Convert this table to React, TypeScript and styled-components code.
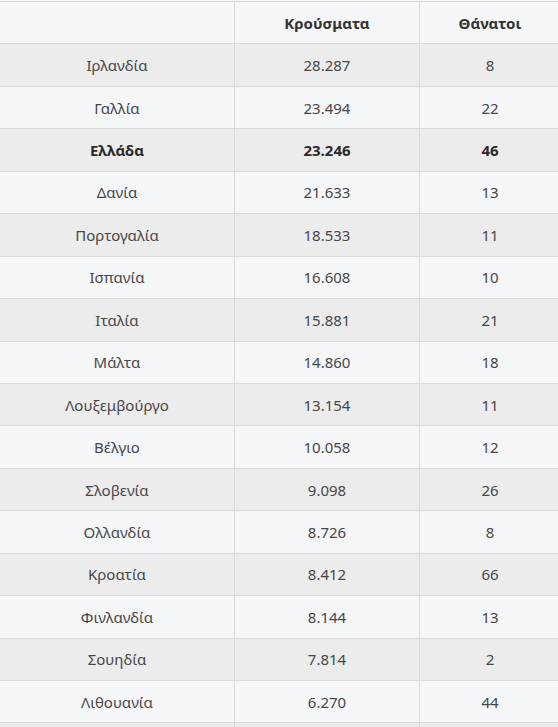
import React from "react";
import styled, { createGlobalStyle } from "styled-components";

const Global = createGlobalStyle`
  html, body { margin: 0; padding: 0; background: #f5f6f8; overflow: hidden; }
  body { font-family: "Noto Sans", "Open Sans", sans-serif; }
`;

const Wrap = styled.div`
  padding-top: 1px;
  margin-left: -1px;
  width: 561px;
`;

const Table = styled.table`
  width: 561px;
  border-collapse: collapse;
  table-layout: fixed;
  color: #3a3a3a;
`;

const Row = styled.tr<{ $shade?: boolean }>`
  height: 42.45px;
  background: ${(p) => (p.$shade ? "#ececec" : "#f5f6f8")};
`;

const Head = styled.th`
  border: 1px solid #dadada;
  font-size: 15px;
  font-weight: 700;
  color: #333;
  text-align: center;
  padding: 0;
`;

const Cell = styled.td<{ $bold?: boolean }>`
  border: 1px solid #dadada;
  font-size: 15px;
  font-weight: ${(p) => (p.$bold ? 700 : 400)};
  color: ${(p) => (p.$bold ? "#2a2a2a" : "#474747")};
  text-align: center;
  padding: 0;
`;

const data: [string, string, string, boolean?][] = [
  ["Ιρλανδία", "28.287", "8"],
  ["Γαλλία", "23.494", "22"],
  ["Ελλάδα", "23.246", "46", true],
  ["Δανία", "21.633", "13"],
  ["Πορτογαλία", "18.533", "11"],
  ["Ισπανία", "16.608", "10"],
  ["Ιταλία", "15.881", "21"],
  ["Μάλτα", "14.860", "18"],
  ["Λουξεμβούργο", "13.154", "11"],
  ["Βέλγιο", "10.058", "12"],
  ["Σλοβενία", "9.098", "26"],
  ["Ολλανδία", "8.726", "8"],
  ["Κροατία", "8.412", "66"],
  ["Φινλανδία", "8.144", "13"],
  ["Σουηδία", "7.814", "2"],
  ["Λιθουανία", "6.270", "44"],
];

export default function App() {
  return (
    <Wrap>
      <Global />
      <Table>
        <colgroup>
          <col style={{ width: 235 }} />
          <col style={{ width: 185 }} />
          <col style={{ width: 141 }} />
        </colgroup>
        <thead>
          <Row>
            <Head></Head>
            <Head>Κρούσματα</Head>
            <Head>Θάνατοι</Head>
          </Row>
        </thead>
        <tbody>
          {data.map(([c, k, d, b], i) => (
            <Row key={c} $shade={i % 2 === 0}>
              <Cell $bold={b}>{c}</Cell>
              <Cell $bold={b}>{k}</Cell>
              <Cell $bold={b}>{d}</Cell>
            </Row>
          ))}
          <Row $shade>
            <Cell></Cell>
            <Cell></Cell>
            <Cell></Cell>
          </Row>
        </tbody>
      </Table>
    </Wrap>
  );
}
